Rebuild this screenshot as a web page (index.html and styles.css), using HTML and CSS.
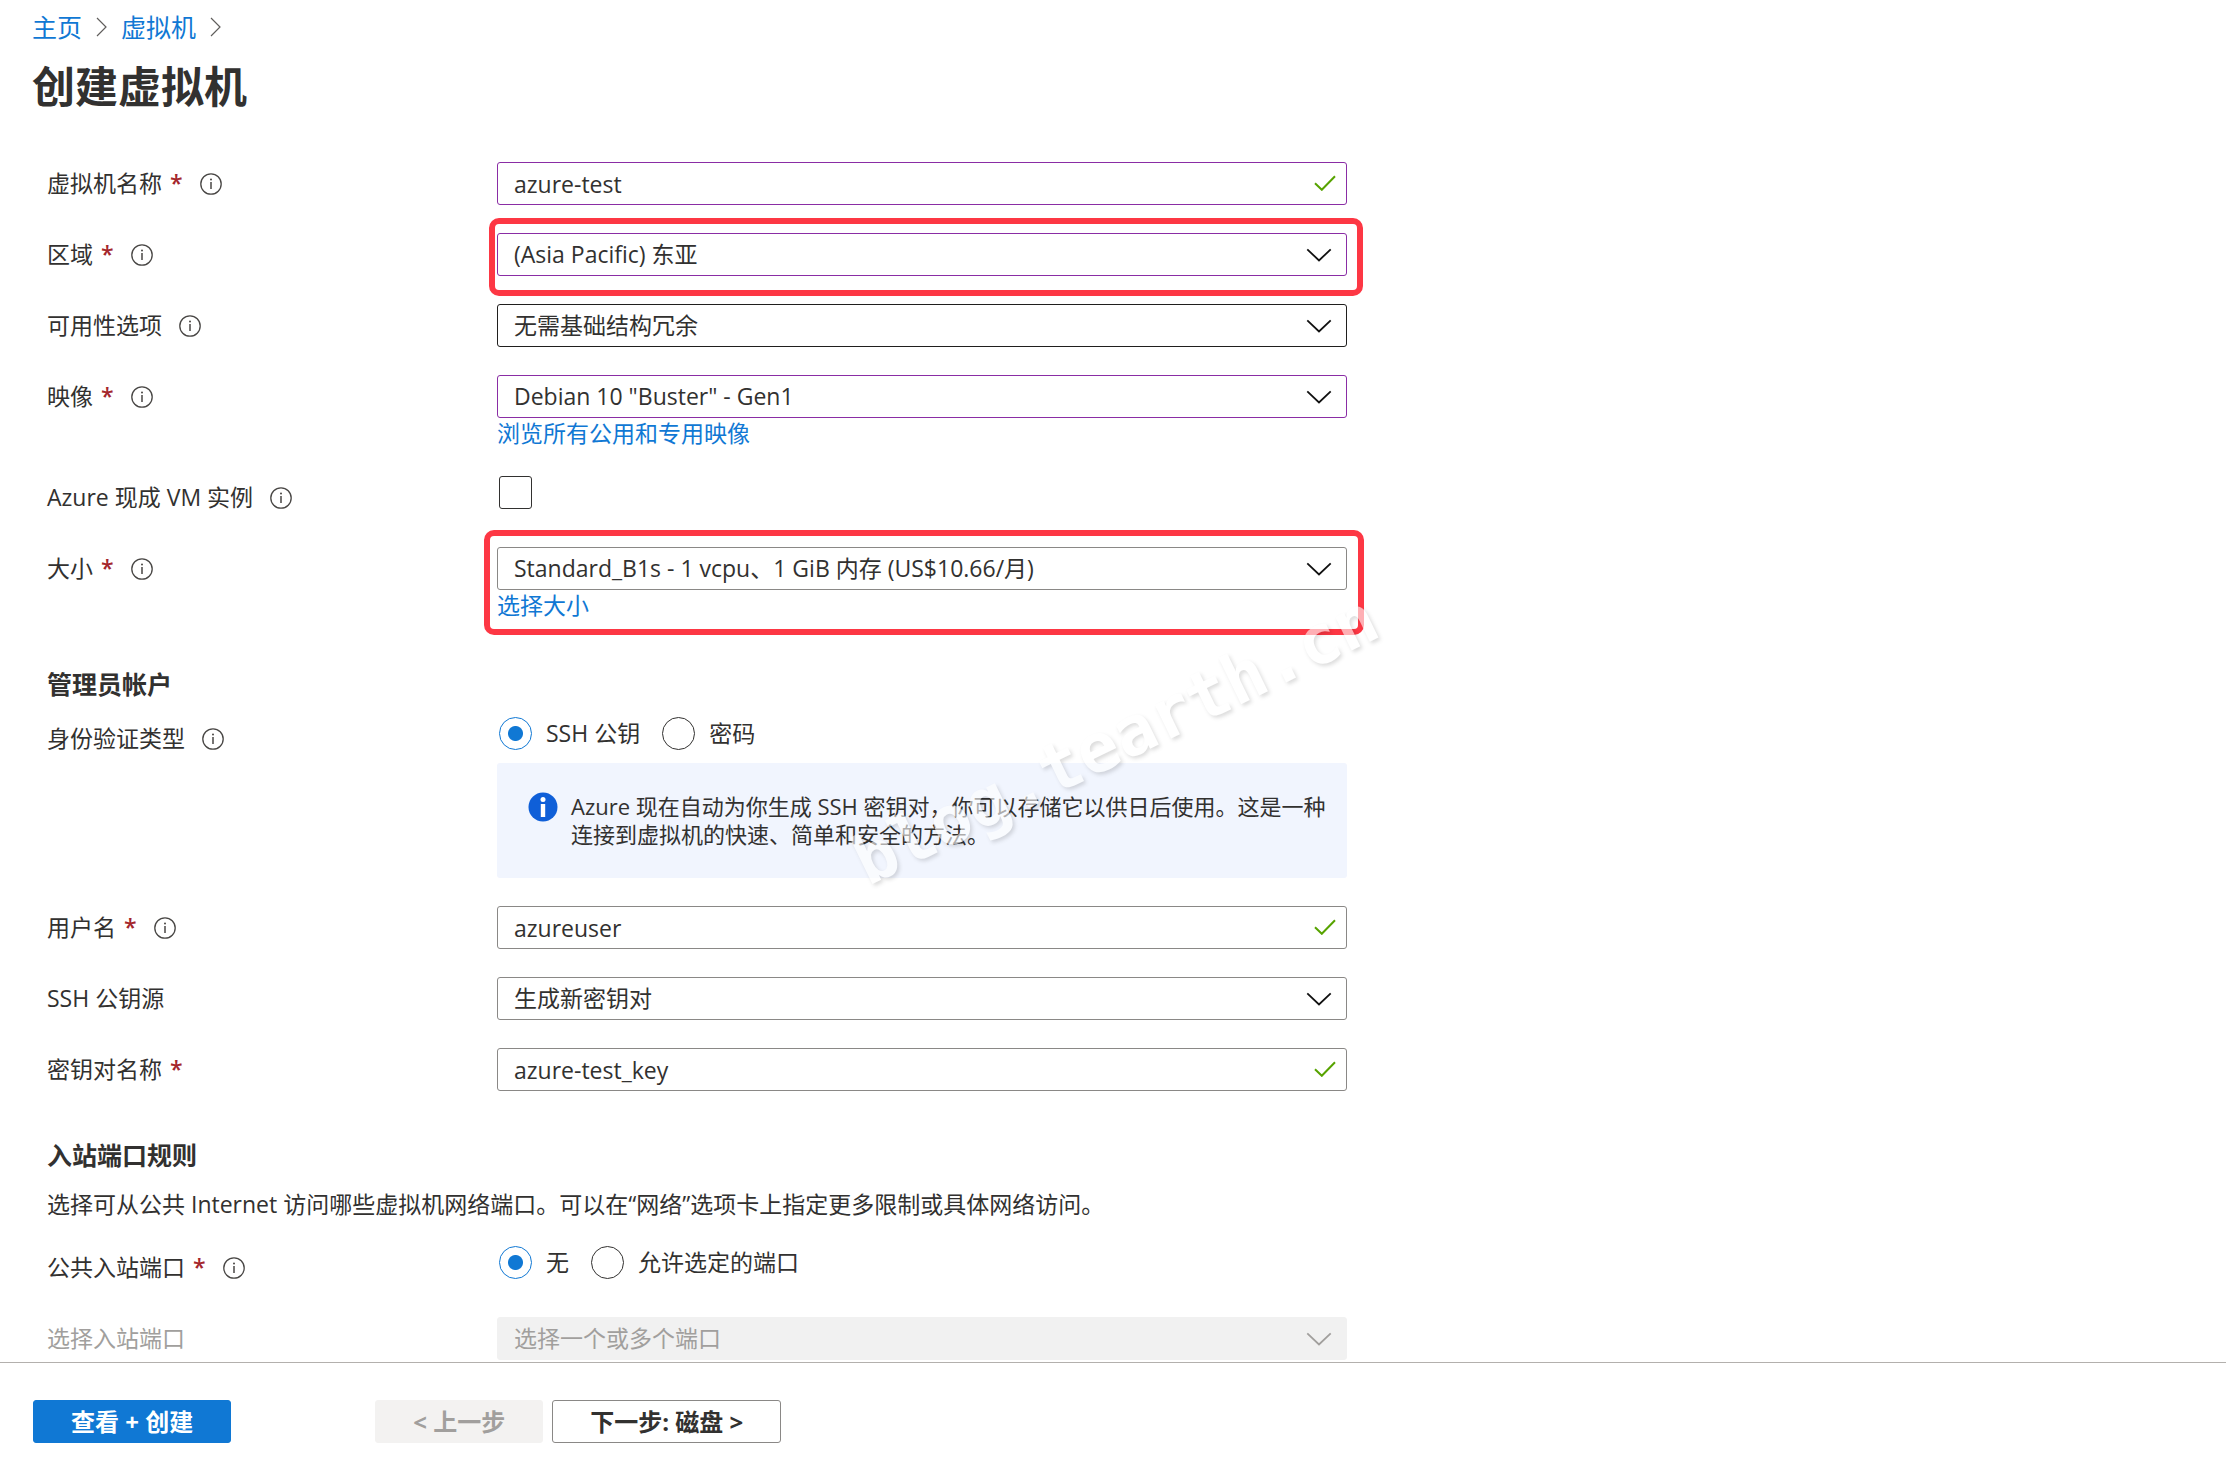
FILE: index.html
```html
<!DOCTYPE html>
<html lang="zh-CN">
<head>
  <meta charset="UTF-8">
  <meta name="viewport" content="width=device-width, initial-scale=1.0">
  <title>创建虚拟机</title>
  <link rel="stylesheet" href="styles.css">
</head>
<body>

  <svg class="symbols" aria-hidden="true">
    <symbol id="info" viewBox="0 0 22 22">
      <circle cx="11" cy="11" r="10.2" fill="none" stroke="currentColor" stroke-width="1.3"/>
      <path d="M11 9v7" stroke="currentColor" stroke-width="1.5"/>
      <circle cx="11" cy="6.4" r="1" fill="currentColor"/>
    </symbol>
    <symbol id="down" viewBox="0 0 26 14">
      <path d="M1.3 1.3L13 12.5L24.700 1.3" fill="none" stroke="currentColor" stroke-width="1.8"/>
    </symbol>
    <symbol id="check" viewBox="0 0 22 16">
      <path d="M1 8.200L7.800 14.800L21 1.200" fill="none" stroke="currentColor" stroke-width="2"/>
    </symbol>
    <symbol id="next" viewBox="0 0 11 20">
      <path d="M1 1L10 10L1 19" fill="none" stroke="currentColor" stroke-width="1.2"/>
    </symbol>
  </svg>

  <header class="page-header">
    <nav class="breadcrumb">
      <a href="#">主页</a>
      <svg class="next-icon"><use href="#next"/></svg>
      <a href="#">虚拟机</a>
      <svg class="next-icon"><use href="#next"/></svg>
    </nav>
    <h1>创建虚拟机</h1>
  </header>

  <main class="content">
    <form class="form" id="vmForm">
      <div class="row">
        <div class="label"><label for="vmName">虚拟机名称</label><span class="required">*</span><svg class="info-icon"><use href="#info"/></svg></div>
        <div class="field">
          <input class="control changed" type="text" id="vmName" value="azure-test">
          <svg class="check-icon"><use href="#check"/></svg>
        </div>
      </div>

      <div class="row">
        <div class="label"><label for="region">区域</label><span class="required">*</span><svg class="info-icon"><use href="#info"/></svg></div>
        <div class="field">
          <select class="control changed" id="region"><option>(Asia Pacific) 东亚</option></select>
          <svg class="down-icon"><use href="#down"/></svg>
          <div class="mark mark-region"></div>
        </div>
      </div>

      <div class="row">
        <div class="label"><label for="availability">可用性选项</label><svg class="info-icon"><use href="#info"/></svg></div>
        <div class="field">
          <select class="control hovered" id="availability"><option>无需基础结构冗余</option></select>
          <svg class="down-icon"><use href="#down"/></svg>
        </div>
      </div>

      <div class="row">
        <div class="label"><label for="image">映像</label><span class="required">*</span><svg class="info-icon"><use href="#info"/></svg></div>
        <div class="field">
          <select class="control changed" id="image"><option>Debian 10 "Buster" - Gen1</option></select>
          <svg class="down-icon"><use href="#down"/></svg>
          <a class="field-link" href="#">浏览所有公用和专用映像</a>
        </div>
      </div>

      <div class="row">
        <div class="label"><label for="spot">Azure 现成 VM 实例</label><svg class="info-icon"><use href="#info"/></svg></div>
        <div class="field choices">
          <input class="tick" type="checkbox" id="spot">
        </div>
      </div>

      <div class="row">
        <div class="label"><label for="size">大小</label><span class="required">*</span><svg class="info-icon"><use href="#info"/></svg></div>
        <div class="field">
          <select class="control" id="size"><option>Standard_B1s - 1 vcpu、1 GiB 内存 (US$10.66/月)</option></select>
          <svg class="down-icon"><use href="#down"/></svg>
          <a class="field-link" href="#">选择大小</a>
          <div class="mark mark-size"></div>
        </div>
      </div>

      <h2>管理员帐户</h2>

      <div class="row">
        <div class="label"><span>身份验证类型</span><svg class="info-icon"><use href="#info"/></svg></div>
        <div class="field">
          <div class="choices">
            <label class="choice"><input class="radio" type="radio" name="auth" checked>SSH 公钥</label>
            <label class="choice"><input class="radio" type="radio" name="auth">密码</label>
          </div>
          <div class="notice">
            <svg class="notice-icon" viewBox="0 0 30 30">
              <circle cx="15" cy="15" r="14.500" fill="#0f5fd8"/>
              <circle cx="15" cy="7.500" r="2.500" fill="#fff"/>
              <path d="M15 12v13" stroke="#fff" stroke-width="4.400"/>
            </svg>
            <p>Azure 现在自动为你生成 SSH 密钥对，你可以存储它以供日后使用。这是一种连接到虚拟机的快速、简单和安全的方法。</p>
          </div>
        </div>
      </div>

      <div class="row">
        <div class="label"><label for="userName">用户名</label><span class="required">*</span><svg class="info-icon"><use href="#info"/></svg></div>
        <div class="field">
          <input class="control" type="text" id="userName" value="azureuser">
          <svg class="check-icon"><use href="#check"/></svg>
        </div>
      </div>

      <div class="row">
        <div class="label"><label for="keySource">SSH 公钥源</label></div>
        <div class="field">
          <select class="control" id="keySource"><option>生成新密钥对</option></select>
          <svg class="down-icon"><use href="#down"/></svg>
        </div>
      </div>

      <div class="row">
        <div class="label"><label for="keyName">密钥对名称</label><span class="required">*</span></div>
        <div class="field">
          <input class="control" type="text" id="keyName" value="azure-test_key">
          <svg class="check-icon"><use href="#check"/></svg>
        </div>
      </div>

      <h2>入站端口规则</h2>
      <p class="description">选择可从公共 Internet 访问哪些虚拟机网络端口。可以在“网络”选项卡上指定更多限制或具体网络访问。</p>

      <div class="row">
        <div class="label"><span>公共入站端口</span><span class="required">*</span><svg class="info-icon"><use href="#info"/></svg></div>
        <div class="field choices">
          <label class="choice"><input class="radio" type="radio" name="ports" checked>无</label>
          <label class="choice"><input class="radio" type="radio" name="ports">允许选定的端口</label>
        </div>
      </div>

      <div class="row row-disabled">
        <div class="label"><label for="portList">选择入站端口</label></div>
        <div class="field">
          <select class="control" id="portList" disabled><option>选择一个或多个端口</option></select>
          <svg class="down-icon"><use href="#down"/></svg>
        </div>
      </div>
    </form>
    <div class="watermark">blog.tearth.cn</div>
  </main>

  <footer class="footer">
    <button class="button primary" type="submit" form="vmForm">查看 + 创建</button>
    <div class="steps">
      <button class="button" type="button" disabled>&lt; 上一步</button>
      <button class="button" type="button">下一步: 磁盘 &gt;</button>
    </div>
  </footer>

</body>
</html>
```

FILE: styles.css
```css
* {
  box-sizing: border-box;
}

body {
  margin: 0;
  height: 100vh;
  display: flex;
  flex-direction: column;
  overflow: hidden;
  font-family: "Open Sans", "Noto Sans CJK SC", sans-serif;
  font-size: 23px;
  line-height: 33px;
  color: #323130;
  background-color: #fff;
}

a {
  color: #1078d4;
  text-decoration: none;
}

a:hover {
  text-decoration: underline;
}

p {
  margin: 0;
}

.symbols {
  position: absolute;
  width: 0;
  height: 0;
}

/* header */
.page-header {
  padding: 10px 32px 0;
}

.breadcrumb {
  display: flex;
  align-items: center;
  gap: 14px;
  font-size: 25px;
  line-height: 34px;
}

.next-icon {
  width: 11px;
  height: 20px;
  color: #605e5c;
}

h1 {
  margin: 14px 0 0;
  font-size: 43px;
  line-height: 58px;
  font-weight: 700;
}

/* form */
.content {
  flex: 1;
  min-height: 0;
  position: relative;
  overflow: hidden;
}

.form {
  padding: 46px 47px 0;
}

.row {
  display: grid;
  grid-template-columns: 450px minmax(0, 850px);
  align-items: start;
  min-height: 43px;
  margin-bottom: 28px;
}

.label {
  display: flex;
  align-items: center;
  height: 43px;
}

.required {
  margin-left: 8px;
  font-weight: 600;
  color: #a4262c;
}

.info-icon {
  width: 22px;
  height: 22px;
  margin-left: 17px;
  color: #484644;
}

.field {
  position: relative;
}

.control {
  display: block;
  width: 100%;
  height: 43px;
  padding: 0 48px 0 16px;
  border: 1px solid #8a8886;
  border-radius: 3px;
  background-color: #fff;
  font: inherit;
  color: inherit;
  appearance: none;
}

.control.changed {
  border-color: #8a2da5;
}

.control.hovered {
  border-color: #201f1e;
}

.control:disabled {
  border-color: #f1f1f1;
  background-color: #f1f1f1;
  color: #a19f9d;
  opacity: 1;
}

.row-disabled {
  margin-bottom: 0;
  color: #a19f9d;
}

.down-icon {
  position: absolute;
  top: 15px;
  right: 15px;
  width: 26px;
  height: 14px;
  color: #111;
  pointer-events: none;
}

.row-disabled .down-icon {
  color: #a19f9d;
}

.check-icon {
  position: absolute;
  top: 13px;
  right: 11px;
  width: 22px;
  height: 16px;
  color: #57a300;
}

.field-link {
  display: block;
  line-height: 30px;
}

/* red marks drawn over the fields */
.mark {
  position: absolute;
  border: 6px solid #fd3744;
  border-radius: 10px;
  pointer-events: none;
}

.mark-region {
  top: -15px;
  right: -16px;
  bottom: -20px;
  left: -8px;
}

.mark-size {
  top: -17px;
  right: -17px;
  bottom: -15px;
  left: -13px;
}

/* checkboxes and radios */
.choices {
  display: flex;
  gap: 22px;
  padding-left: 2px;
}

.choice {
  display: flex;
  align-items: center;
  gap: 14px;
}

.tick,
.radio {
  width: 33px;
  height: 33px;
  margin: 0;
  border: 1px solid #323130;
  border-radius: 3px;
  background-color: #fff;
  appearance: none;
}

.radio {
  border-radius: 50%;
}

.radio:checked {
  border-color: #1078d4;
  background-image: radial-gradient(circle, #1078d4 7px, transparent 8px);
}

.notice {
  display: flex;
  gap: 13px;
  min-height: 115px;
  margin-top: 13px;
  padding: 29px 12px 28px 31px;
  border-radius: 3px;
  background-color: #f1f5fe;
  font-size: 22px;
  line-height: 28px;
}

.notice-icon {
  flex: none;
  width: 30px;
  height: 30px;
}

h2 {
  margin: 48px 0 17px;
  font-size: 25px;
  line-height: 32px;
  font-weight: 700;
}

.description {
  margin-bottom: 25px;
}

.watermark {
  position: absolute;
  top: 584px;
  left: 829px;
  font-family: "DejaVu Sans Mono", monospace;
  font-size: 68px;
  font-weight: 700;
  line-height: 80px;
  color: #fff;
  text-shadow: 1px 3px 4px rgba(0, 0, 0, 0.22);
  opacity: 0.6;
  transform: rotate(-26deg);
  pointer-events: none;
}

/* footer */
.footer {
  display: flex;
  gap: 144px;
  height: 108px;
  padding: 37px 33px 0;
  border-top: 1px solid #b3b0ad;
}

.steps {
  display: flex;
  gap: 9px;
}

.button {
  height: 43px;
  padding: 0 37px;
  border: 1px solid #8a8886;
  border-radius: 3px;
  background-color: #fff;
  font: inherit;
  font-size: 24px;
  font-weight: 700;
  color: #323130;
  cursor: pointer;
}

.button.primary {
  border-color: #1078d4;
  background-color: #1078d4;
  color: #fff;
}

.button:disabled {
  border-color: #f3f2f1;
  background-color: #f3f2f1;
  color: #a19f9d;
  cursor: default;
}
```
